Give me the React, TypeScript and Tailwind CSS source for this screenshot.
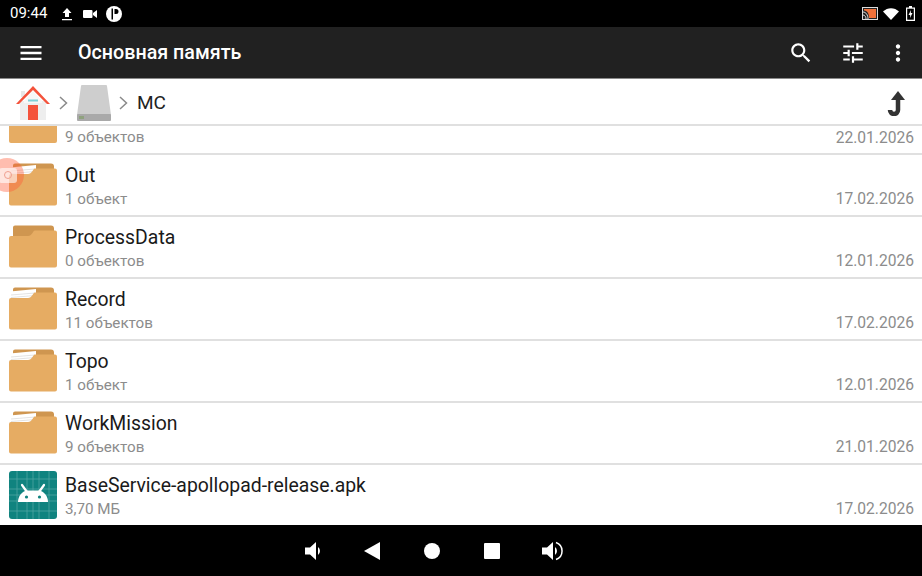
type Kind = 'full' | 'empty' | 'apk'

interface Row {
  name: string
  sub: string
  date: string
  kind: Kind
}

const rows: Row[] = [
  { name: 'Out', sub: '1 объект', date: '17.02.2026', kind: 'full' },
  { name: 'ProcessData', sub: '0 объектов', date: '12.01.2026', kind: 'empty' },
  { name: 'Record', sub: '11 объектов', date: '17.02.2026', kind: 'full' },
  { name: 'Topo', sub: '1 объект', date: '12.01.2026', kind: 'full' },
  { name: 'WorkMission', sub: '9 объектов', date: '21.01.2026', kind: 'full' },
  { name: 'BaseService-apollopad-release.apk', sub: '3,70 МБ', date: '17.02.2026', kind: 'apk' },
]

function FolderIcon({ empty }: { empty?: boolean }) {
  return (
    <svg width="48" height="48" viewBox="0 0 48 48">
      <path d="M4 4.500a2 2 0 0 1 2-2h36a3 3 0 0 1 3 3V20H4z" fill="#cf9650" />
      {!empty && <path d="M1 6.500L27 4v10H1z" fill="#ffffff" />}
      {!empty && <path d="M2 10l24-2M2 12.500l24-2" stroke="#dcdcdc" strokeWidth="0.8" />}
      <path
        d="M0 15a2 2 0 0 1 2-2h17c2 0 3-1 4.500-3l1-1.500c0.500-0.700 1-1 2-1H46a2 2 0 0 1 2 2v33a2 2 0 0 1-2 2H2a2 2 0 0 1-2-2z"
        fill="#e6ac63"
      />
    </svg>
  )
}

function ApkIcon() {
  return (
    <svg width="48" height="48" viewBox="0 0 48 48">
      <rect width="48" height="48" rx="3" fill="#10837f" />
      <path
        d="M8 0v48M18 0v48M24 0v48M30 0v48M40 0v48M0 8h48M0 18h48M0 24h48M0 30h48M0 40h48"
        stroke="#4fa5a2"
        strokeWidth="0.8"
      />
      <path d="M9 31c0-6 4-10 8-11.500h14c4 1.500 8 5.500 8 11.500z" fill="#fff" />
      <path d="M13 14l5 7M35 14l-5 7" stroke="#fff" strokeWidth="2.200" strokeLinecap="round" />
      <circle cx="17.500" cy="26" r="1.600" fill="#10837f" />
      <circle cx="30.500" cy="26" r="1.600" fill="#10837f" />
    </svg>
  )
}

function HomeIcon() {
  return (
    <svg width="34" height="34" viewBox="0 0 34 34">
      <path d="M4 15h26v19H4z" fill="#eeeeee" />
      <path d="M8 15L17 5l9 10v2H8z" fill="#f7f7f7" />
      <path d="M5 5h4v6H5z" fill="#e8e8e8" />
      <path d="M0 18L17 0l17 18h-3L17 4 3 18z" fill="#f4523b" />
      <rect x="12" y="13.500" width="10" height="2" fill="#7fd0d8" />
      <rect x="12" y="19" width="10" height="15" fill="#f4523b" />
    </svg>
  )
}

function DriveIcon() {
  return (
    <svg width="34" height="36" viewBox="0 0 34 36">
      <path d="M4 1a1 1 0 0 1 1-1h24a1 1 0 0 1 1 1l4 29H0z" fill="#cecece" />
      <rect y="29" width="34" height="7" rx="1" fill="#a9a9a9" />
      <rect x="2" y="31" width="5" height="3" fill="#8fa27e" />
    </svg>
  )
}

function Chevron() {
  return (
    <svg width="9" height="14" viewBox="0 0 9 14" fill="none" stroke="#8a8a8a" strokeWidth="1.500">
      <path d="M1 1l6.500 6L1 13" />
    </svg>
  )
}

function UpArrow() {
  return (
    <svg width="18" height="25" viewBox="0 0 18 25" fill="none">
      <path d="M11 0l7 9H4z" fill="#333" />
      <path d="M11 7v12a4 4 0 0 1-8 0" stroke="#333" strokeWidth="4.500" />
    </svg>
  )
}

function MaterialIcon({ d, size }: { d: string; size: number }) {
  return (
    <svg width={size} height={size} viewBox="0 0 24 24" fill="#fff">
      <path d={d} />
    </svg>
  )
}

function StatusBar() {
  return (
    <div className="flex h-[27px] items-center justify-between bg-black pl-[10px] pr-[7px] text-white">
      <div className="flex items-center">
        <span className="text-[15px] leading-none">09:44</span>
        <svg className="ml-[14px]" width="12" height="14" viewBox="0 0 12 14" fill="#fff">
          <path d="M6 1l4.500 5H8v4H4V6H1.500zM1 12h10v1.300H1z" />
        </svg>
        <svg className="ml-[10px]" width="14" height="10" viewBox="0 0 14 10" fill="#fff">
          <rect y="1" width="9.500" height="8" rx="1" />
          <path d="M10 4l4-3v8l-4-3z" />
        </svg>
        <svg className="ml-[9px]" width="16" height="16" viewBox="0 0 16 16">
          <circle cx="8" cy="8" r="8" fill="#fff" />
          <path d="M7 2.500H5.500v11H7zM8.500 3h1.500a2.500 2.500 0 0 1 0 5H8.500z" fill="#000" />
        </svg>
      </div>
      <div className="flex items-center">
        <svg width="16" height="13" viewBox="0 0 16 13">
          <rect x="0.500" y="0.500" width="15" height="12" fill="#222" stroke="#ddd" />
          <path d="M2 2h12v9H7C7 7 6 4 2 3.500z" fill="#f0713a" />
          <path d="M1 5c3 0 5 3 5 7M1 8c2 0 3 2 3 4" stroke="#ddd" fill="none" />
        </svg>
        <svg className="ml-[5px]" width="16" height="12" viewBox="0 0 16 12" fill="#fff">
          <path d="M0 3.500C4.500-1 11.500-1 16 3.500L8 12z" />
        </svg>
        <svg className="ml-[7px]" width="9" height="15" viewBox="0 0 9 15">
          <path d="M3 0h3v1.500h3V15H0V1.500h3z" fill="#fff" />
          <rect x="1.200" y="2.700" width="6.600" height="11" fill="#000" />
          <path d="M5 4L2.500 9H4.200L4 12l2.500-5H4.800z" fill="#fff" />
        </svg>
      </div>
    </div>
  )
}

function AppBar() {
  return (
    <div className="flex h-[52px] items-center border-b border-[#8a8a8a] bg-[#212121] text-white">
      <span className="ml-[17px] flex">
        <MaterialIcon size={28} d="M3 18h18v-2H3v2zm0-5h18v-2H3v2zm0-7v2h18V6H3z" />
      </span>
      <span className="ml-[33px] text-[19.700px] font-medium leading-none">Основная память</span>
      <span className="ml-auto flex">
        <MaterialIcon
          size={26}
          d="M15.500 14h-.79l-.28-.27C15.410 12.590 16 11.110 16 9.500 16 5.910 13.090 3 9.500 3S3 5.910 3 9.500 5.910 16 9.500 16c1.610 0 3.090-.59 4.230-1.570l.27.28v.79l5 4.990L20.490 19l-4.990-5zm-6 0C7.010 14 5 11.990 5 9.500S7.010 5 9.500 5 14 7.010 14 9.500 11.990 14 9.500 14z"
        />
      </span>
      <span className="ml-[26px] flex">
        <MaterialIcon
          size={26}
          d="M3 17v2h6v-2H3zM3 5v2h10V5H3zm10 16v-2h8v-2h-8v-2h-2v6h2zM7 9v2H3v2h4v2h2V9H7zm14 4v-2H11v2h10zm-6-4h2V7h4V5h-4V3h-2v6z"
        />
      </span>
      <span className="ml-[19px] mr-[11px] flex">
        <MaterialIcon
          size={26}
          d="M12 8c1.100 0 2-.9 2-2s-.9-2-2-2-2 .9-2 2 .9 2 2 2zm0 2c-1.100 0-2 .9-2 2s.9 2 2 2 2-.9 2-2-.9-2-2-2zm0 6c-1.100 0-2 .9-2 2s.9 2 2 2 2-.9 2-2-.9-2-2-2z"
        />
      </span>
    </div>
  )
}

function Breadcrumb() {
  return (
    <div className="flex h-[47px] items-center border-b-2 border-[#e0e0e0] bg-white pl-[16px] pr-[17px] pt-[3px]">
      <HomeIcon />
      <span className="ml-[9px] flex"><Chevron /></span>
      <span className="ml-[9px] flex"><DriveIcon /></span>
      <span className="ml-[8px] flex"><Chevron /></span>
      <span className="ml-[9px] pb-[2px] text-[19px] leading-none text-[#222]">MC</span>
      <span className="ml-auto flex"><UpArrow /></span>
    </div>
  )
}

function FileRow({ row }: { row: Row }) {
  return (
    <div className="flex h-[62px] shrink-0 items-center border-b-2 border-[#e0e0e0] pl-[9px] pr-[8px]">
      {row.kind === 'apk' ? <ApkIcon /> : <FolderIcon empty={row.kind === 'empty'} />}
      <div className="ml-[8px] flex min-w-0 flex-col pt-[4px]">
        <span className="text-[19.400px] leading-[24px] text-[#1a1a1a]">{row.name}</span>
        <span className="text-[15.200px] leading-[22px] text-[#8c8c8c]">{row.sub}</span>
      </div>
      <span className="ml-auto self-end pb-[6px] text-[15.600px] leading-[20px] text-[#8c8c8c]">{row.date}</span>
    </div>
  )
}

export default function App() {
  return (
    <div className="flex h-[576px] w-[922px] flex-col overflow-hidden bg-white font-['Roboto',sans-serif]">
      <StatusBar />
      <AppBar />
      <Breadcrumb />
      <div className="relative flex min-h-0 flex-1 flex-col overflow-hidden">
        {/* row scrolled under the breadcrumb */}
        <div className="flex h-[29px] shrink-0 items-end border-b-2 border-[#e0e0e0] pl-[9px] pr-[8px]">
          <div className="h-[17px] w-[48px] self-start rounded-b-[2px] bg-[#e6ac63]" />
          <span className="ml-[8px] pb-[5px] text-[15.200px] leading-[22px] text-[#8c8c8c]">9 объектов</span>
          <span className="ml-auto pb-[5px] text-[15.600px] leading-[20px] text-[#8c8c8c]">22.01.2026</span>
        </div>
        {rows.map(row => (
          <FileRow key={row.name} row={row} />
        ))}
        {/* touch indicator */}
        <div className="absolute left-[-10px] top-[32px] flex h-[34px] w-[34px] items-center justify-center rounded-full bg-[#ff5a36]/40">
          <div className="ml-[2px] flex h-[15px] w-[18px] items-center justify-center rounded-[3px] bg-white/60">
            <div className="h-[8px] w-[8px] rounded-full border border-[#f0a090]" />
          </div>
        </div>
      </div>
      <div className="flex h-[51px] shrink-0 items-center justify-center gap-[36px] bg-black pr-[59px]">
        <svg width="24" height="24" viewBox="-2 0 24 24" fill="#fff">
          <path d="M3 8.500h5L14 3v18l-6-5.500H3z" />
          <path d="M16 8a5 5 0 0 1 0 8z" />
        </svg>
        <svg width="24" height="24" viewBox="0 0 24 24" fill="#fff">
          <path d="M4 12L20 3v18z" />
        </svg>
        <svg width="24" height="24" viewBox="0 0 24 24" fill="#fff">
          <circle cx="12" cy="12" r="8" />
        </svg>
        <svg width="24" height="24" viewBox="0 0 24 24" fill="#fff">
          <rect x="4" y="4" width="16" height="16" rx="1" />
        </svg>
        <svg width="24" height="24" viewBox="0 0 24 24" fill="#fff">
          <path d="M2 8.500h5L13 3v18l-6-5.500H2z" />
          <path d="M15 8a5 5 0 0 1 0 8z" />
          <path d="M16 3.500a9 9 0 0 1 0 17" fill="none" stroke="#fff" strokeWidth="1.500" />
        </svg>
      </div>
    </div>
  )
}
